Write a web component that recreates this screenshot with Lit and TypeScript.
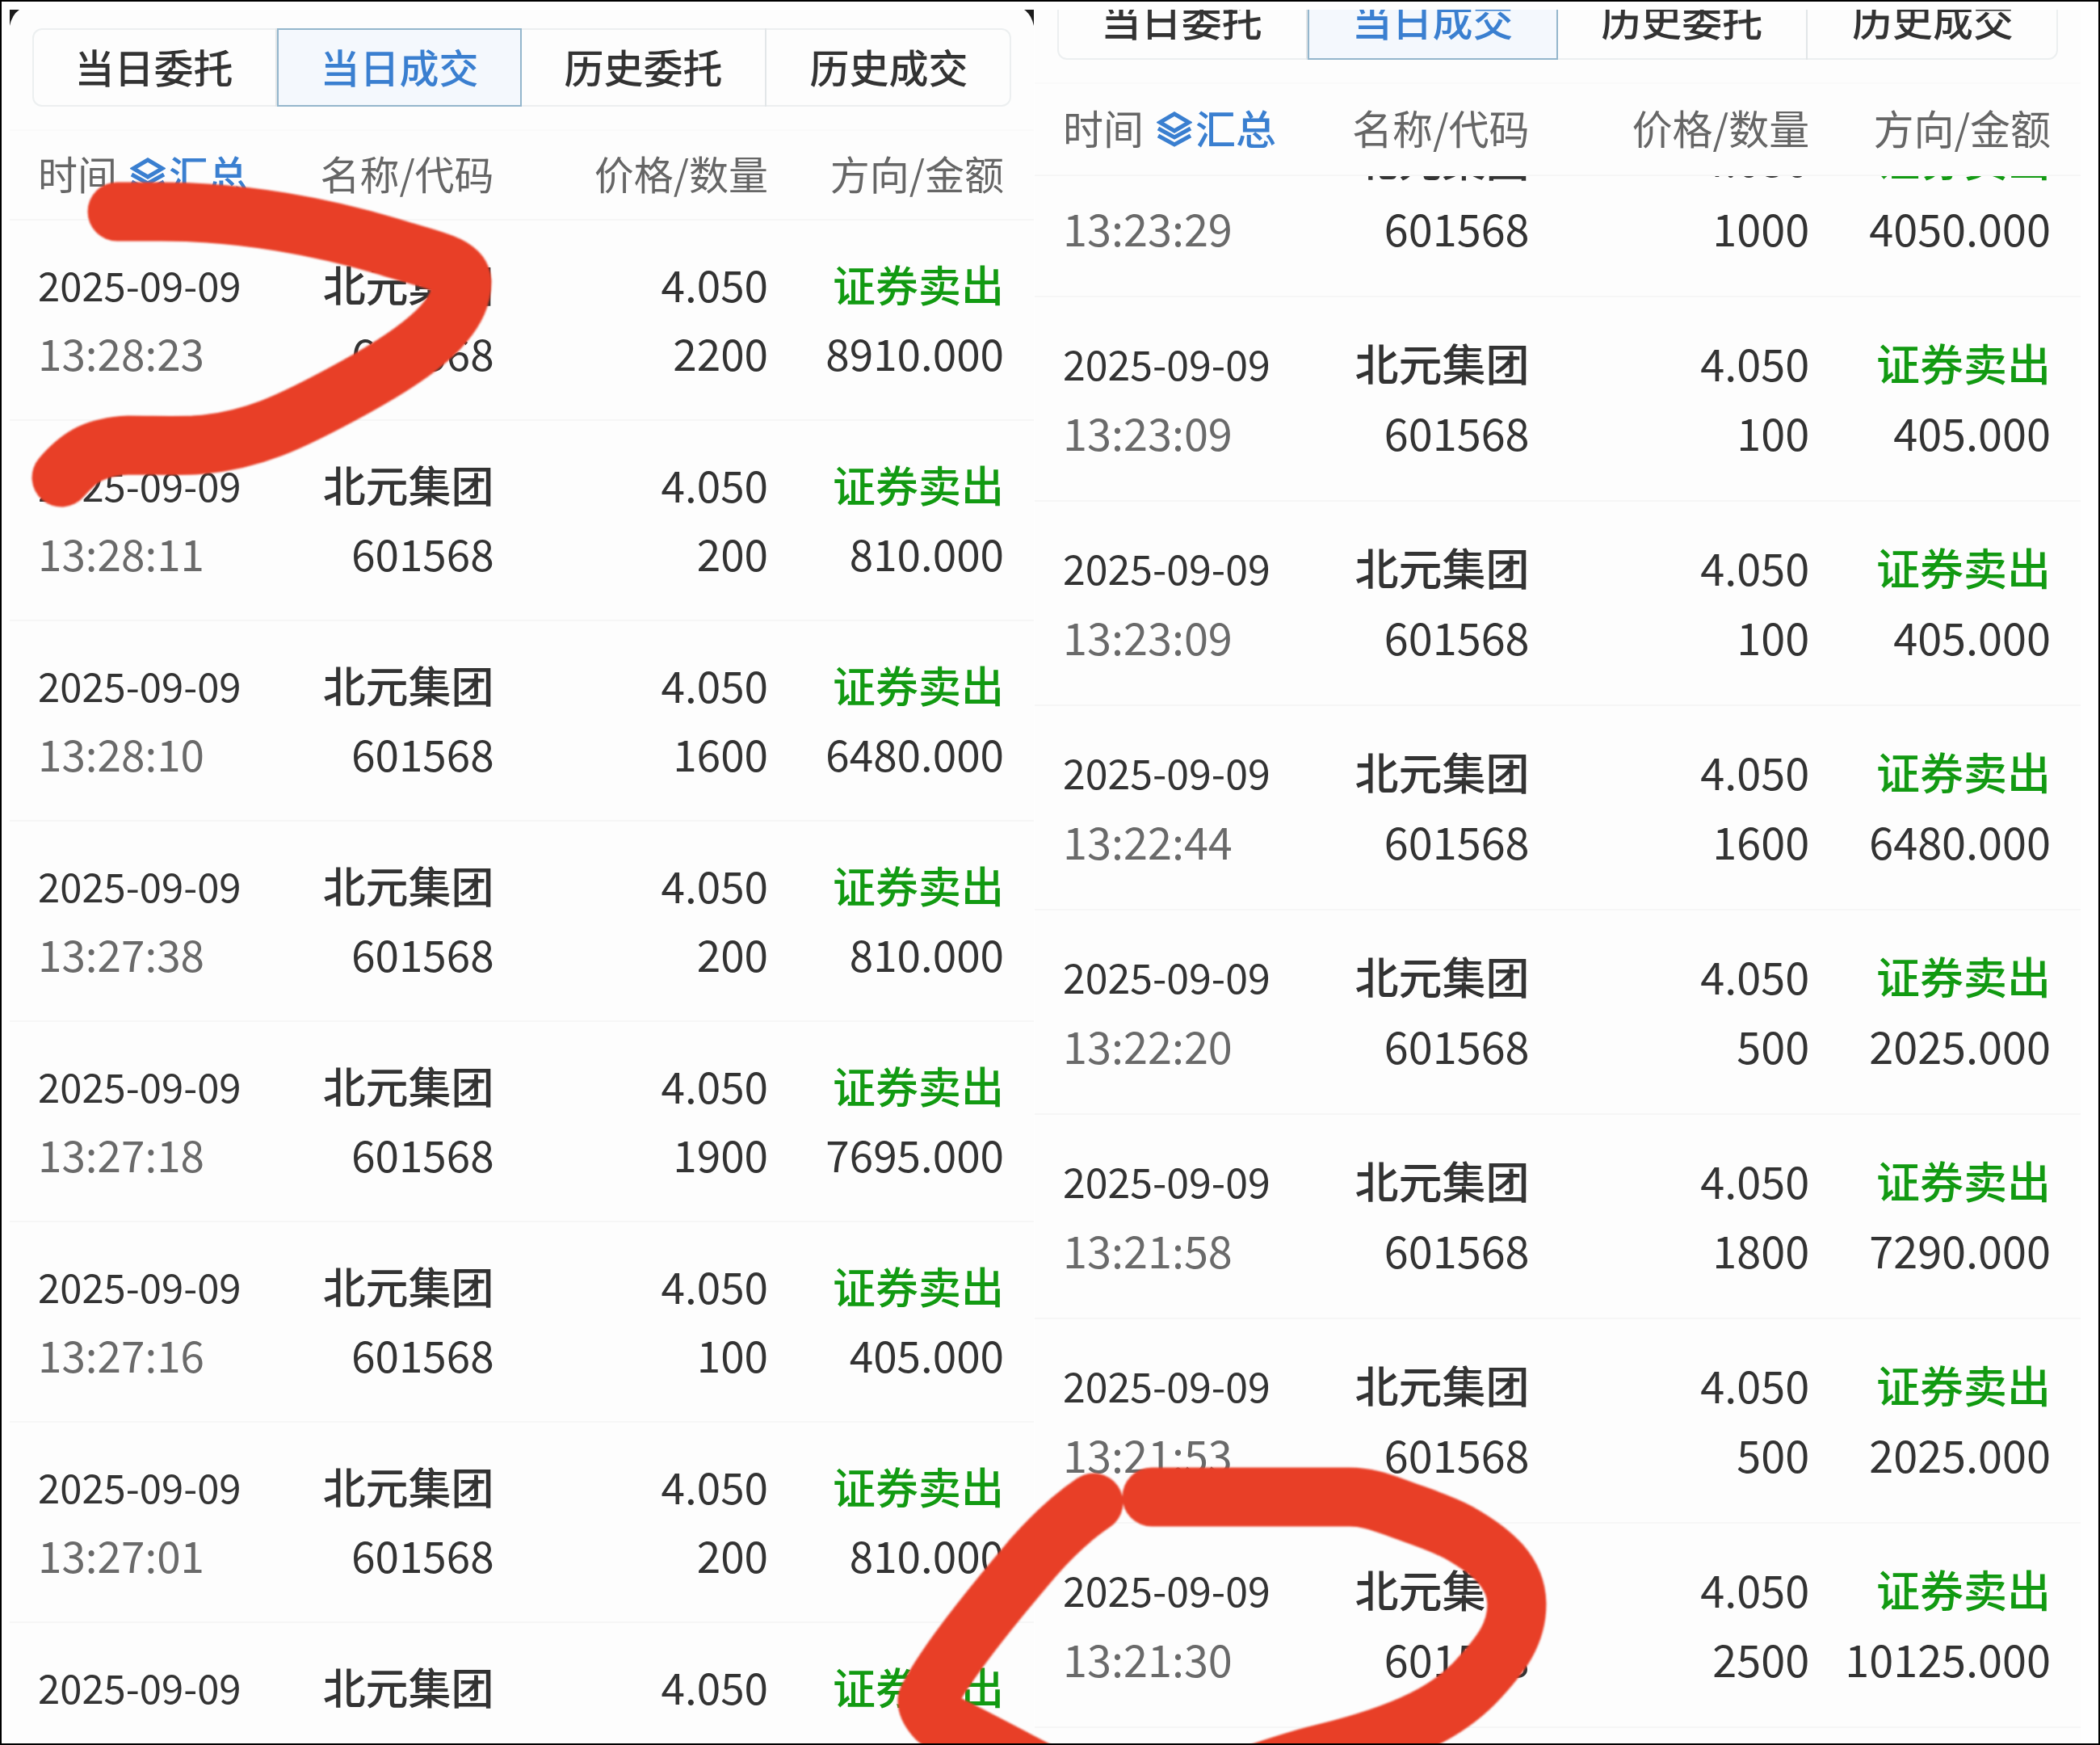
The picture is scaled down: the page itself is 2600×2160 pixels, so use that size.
import { LitElement, html, css, svg } from "lit";
import { customElement, property, state } from "lit/decorators.js";
import { classMap } from "lit/directives/class-map.js";

interface Deal {
  date?: string;
  time?: string;
  name: string;
  code?: string;
  price: string;
  volume?: string;
  side: string;
  amount?: string;
}

const DATE = "2025-09-09";
const STOCK = { name: "北元集团", price: "4.050", side: "证券卖出" };

const deal = (time: string, volume: string, amount: string): Deal => ({
  ...STOCK,
  date: DATE,
  time,
  code: "601568",
  volume,
  amount,
});

const LATEST: Deal[] = [
  deal("13:28:23", "2200", "8910.000"),
  deal("13:28:11", "200", "810.000"),
  deal("13:28:10", "1600", "6480.000"),
  deal("13:27:38", "200", "810.000"),
  deal("13:27:18", "1900", "7695.000"),
  deal("13:27:16", "100", "405.000"),
  deal("13:27:01", "200", "810.000"),
  { ...STOCK, date: DATE },
];

const EARLIER: Deal[] = [
  { ...deal("13:23:29", "1000", "4050.000"), date: undefined },
  deal("13:23:09", "100", "405.000"),
  deal("13:23:09", "100", "405.000"),
  deal("13:22:44", "1600", "6480.000"),
  deal("13:22:20", "500", "2025.000"),
  deal("13:21:58", "1800", "7290.000"),
  deal("13:21:53", "500", "2025.000"),
  deal("13:21:30", "2500", "10125.000"),
];

const TABS = ["当日委托", "当日成交", "历史委托", "历史成交"];

@customElement("deal-panel")
export class DealPanel extends LitElement {
  @property({ attribute: false }) deals: Deal[] = [];
  @property({ type: Boolean, reflect: true }) scrolled = false;
  @property({ type: Boolean }) corners = false;
  @state() private selected = 1;

  static styles = css`
    :host {
      --text: 53px;
      --small: 49px;
      --tab-height: 97px;
      --tab-top: 23px;
      --head: 113px;
      --row: 248px;
      --line: 85px;
      --row-top: 36px;
      position: relative;
      display: flex;
      flex-direction: column;
      min-width: 0;
      min-height: 0;
      overflow: hidden;
      background: #fdfdfd;
      color: #333;
    }
    :host([scrolled]) {
      --text: 54px;
      --small: 50px;
      --tab-height: 99px;
      --tab-top: -37px;
      --head: 116px;
      --row: 253px;
      --line: 86px;
      --row-top: 38px;
    }
    .tabs {
      flex: none;
      display: grid;
      grid-template-columns: repeat(4, 1fr);
      height: var(--tab-height);
      margin: var(--tab-top) 28px 28px;
      box-sizing: border-box;
      border-radius: 12px;
      box-shadow: inset 0 0 0 2px #eceff0;
    }
    button {
      margin: 0;
      padding: 0;
      border: 0;
      background: none;
      font: inherit;
      color: inherit;
      cursor: pointer;
    }
    .tab {
      padding-bottom: 4px;
      font-size: var(--small);
      font-weight: 500;
      line-height: 72px;
      border-right: 2px solid #e2e6e8;
    }
    .tab:last-child {
      border-right: 0;
    }
    .tab.on {
      color: #3a7fd0;
      background: #f4f8fd;
      border: 2px solid #94b6cc;
    }
    .list {
      flex: 1;
      min-height: 0;
      overflow: auto;
      scrollbar-width: none;
      box-shadow: inset 0 2px #fafafa;
    }
    table {
      width: 100%;
      table-layout: fixed;
      border-spacing: 0;
      margin-bottom: 24px;
    }
    th,
    td {
      box-sizing: border-box;
      padding: 0;
      text-align: right;
      font-weight: 400;
      border-bottom: 2px solid #f6f6f6;
    }
    th {
      position: sticky;
      top: 0;
      height: var(--head);
      padding-bottom: 6px;
      font-size: var(--small);
      line-height: 72px;
      color: #666;
      background: #fdfdfd;
      border-top: 2px solid #fafafa;
      white-space: nowrap;
    }
    td {
      height: var(--row);
      padding-top: var(--row-top);
      vertical-align: top;
      font-size: var(--text);
      white-space: nowrap;
    }
    .time {
      width: 27%;
      padding-left: 35px;
      text-align: left;
    }
    .name {
      width: 21%;
      padding-right: 9px;
    }
    .price {
      width: 27%;
      padding-right: 12px;
    }
    .side {
      width: 25%;
      padding-right: 37px;
    }
    .line {
      display: block;
      height: var(--line);
      line-height: var(--line);
    }
    .date {
      font-size: var(--small);
    }
    .clock {
      color: #6a6a6a;
    }
    .stock {
      font-weight: 500;
    }
    .sell {
      font-weight: 500;
      color: #129a12;
    }
    .head {
      display: flex;
      align-items: center;
      gap: 16px;
    }
    .sum {
      display: flex;
      align-items: center;
      gap: 4px;
      color: #3a7fd0;
      font-weight: 500;
    }
    .layers {
      width: 44px;
      height: 44px;
      margin-top: 6px;
      fill: none;
      stroke: currentColor;
      stroke-width: 5;
    }
    .corner {
      position: absolute;
      top: 0;
      left: 0;
      width: 12px;
      height: 20px;
      fill: #1c1c1c;
    }
    .corner.right {
      left: auto;
      right: 0;
    }
  `;

  protected firstUpdated() {
    if (this.scrolled) {
      this.renderRoot.querySelector(".list")!.scrollTop = 103;
    }
  }

  render() {
    return html`
      ${this.corners
        ? html`
            <svg class="corner" viewBox="0 0 12 20" aria-hidden="true"><path d="M0 0H12Q3 6 0 20Z" /></svg>
            <svg class="corner right" viewBox="0 0 12 20" aria-hidden="true"><path d="M12 0H0Q9 6 12 20Z" /></svg>
          `
        : null}
      <nav class="tabs">
        ${TABS.map(
          (label, i) => html`<button
            type="button"
            class=${classMap({ tab: true, on: i === this.selected })}
            @click=${() => (this.selected = i)}
          >${label}</button>`
        )}
      </nav>
      <div class="list">
        <table>
          <thead>
            <tr>
              <th class="time" scope="col">
                <div class="head">
                  <span>时间</span>
                  <button type="button" class="sum">
                    <svg class="layers" viewBox="0 0 44 44" aria-hidden="true">
                      <path d="M22 3L40 13.500L22 24L4 13.500Z" />
                      <path d="M2 21L22 32L42 21M2 30L22 41L42 30" />
                    </svg>
                    <span>汇总</span>
                  </button>
                </div>
              </th>
              <th class="name" scope="col">名称/代码</th>
              <th class="price" scope="col">价格/数量</th>
              <th class="side" scope="col">方向/金额</th>
            </tr>
          </thead>
          <tbody>
            ${this.deals.map(
              (d) => html`<tr>
                <td class="time">
                  <span class="line date">${d.date}</span>
                  <span class="line clock">${d.time}</span>
                </td>
                <td class="name">
                  <span class="line stock">${d.name}</span>
                  <span class="line">${d.code}</span>
                </td>
                <td class="price">
                  <span class="line">${d.price}</span>
                  <span class="line">${d.volume}</span>
                </td>
                <td class="side">
                  <span class="line sell">${d.side}</span>
                  <span class="line">${d.amount}</span>
                </td>
              </tr>`
            )}
          </tbody>
        </table>
      </div>
    `;
  }
}

const MARKS = [
  "M145 262H200C300 262 400 281 480 305C530 321 570 326 572 349C572 401 500 446 440 479C360 523 310 547 240 551C210 552 190 551 160 551C120 553 100 563 76 591",
  "M1426 1853H1671C1690 1853 1706 1858 1728 1866C1757 1877 1782 1884 1806 1897C1850 1922 1877 1947 1878 1985C1878 2022 1860 2047 1825 2084C1795 2114 1750 2143 1640 2170C1560 2188 1460 2240 1360 2230C1290 2196 1210 2152 1160 2128Q1147 2114 1148 2104Q1157 2086 1170 2067C1200 2022 1240 1974 1280 1927Q1318 1884 1354 1860",
];

@customElement("app-root")
export class AppRoot extends LitElement {
  static styles = css`
    :host {
      display: block;
      font-family: "Noto Sans CJK SC", "Noto Sans", sans-serif;
    }
    .page {
      position: relative;
      display: grid;
      grid-template-columns: 1268fr 1295fr;
      grid-template-rows: minmax(0, 1fr);
      gap: 1px;
      height: 100vh;
      box-sizing: border-box;
      padding: 10px 22px 0 10px;
      border: 2px solid #000;
      background: #fefefe;
      overflow: hidden;
    }
    .marks {
      position: absolute;
      inset: 0;
      width: 100%;
      height: 100%;
      pointer-events: none;
      fill: none;
      stroke: #e83f27;
      stroke-width: 73;
      stroke-linecap: round;
      stroke-linejoin: round;
    }
    .soft {
      filter: blur(1px);
    }
  `;

  render() {
    return html`
      <main class="page">
        <deal-panel corners .deals=${LATEST}></deal-panel>
        <deal-panel scrolled .deals=${EARLIER}></deal-panel>
        <svg class="marks" viewBox="2 2 2596 2156" preserveAspectRatio="none" aria-hidden="true">
          ${MARKS.map((d) => svg`<path class="soft" d=${d} />`)}
        </svg>
      </main>
    `;
  }
}
